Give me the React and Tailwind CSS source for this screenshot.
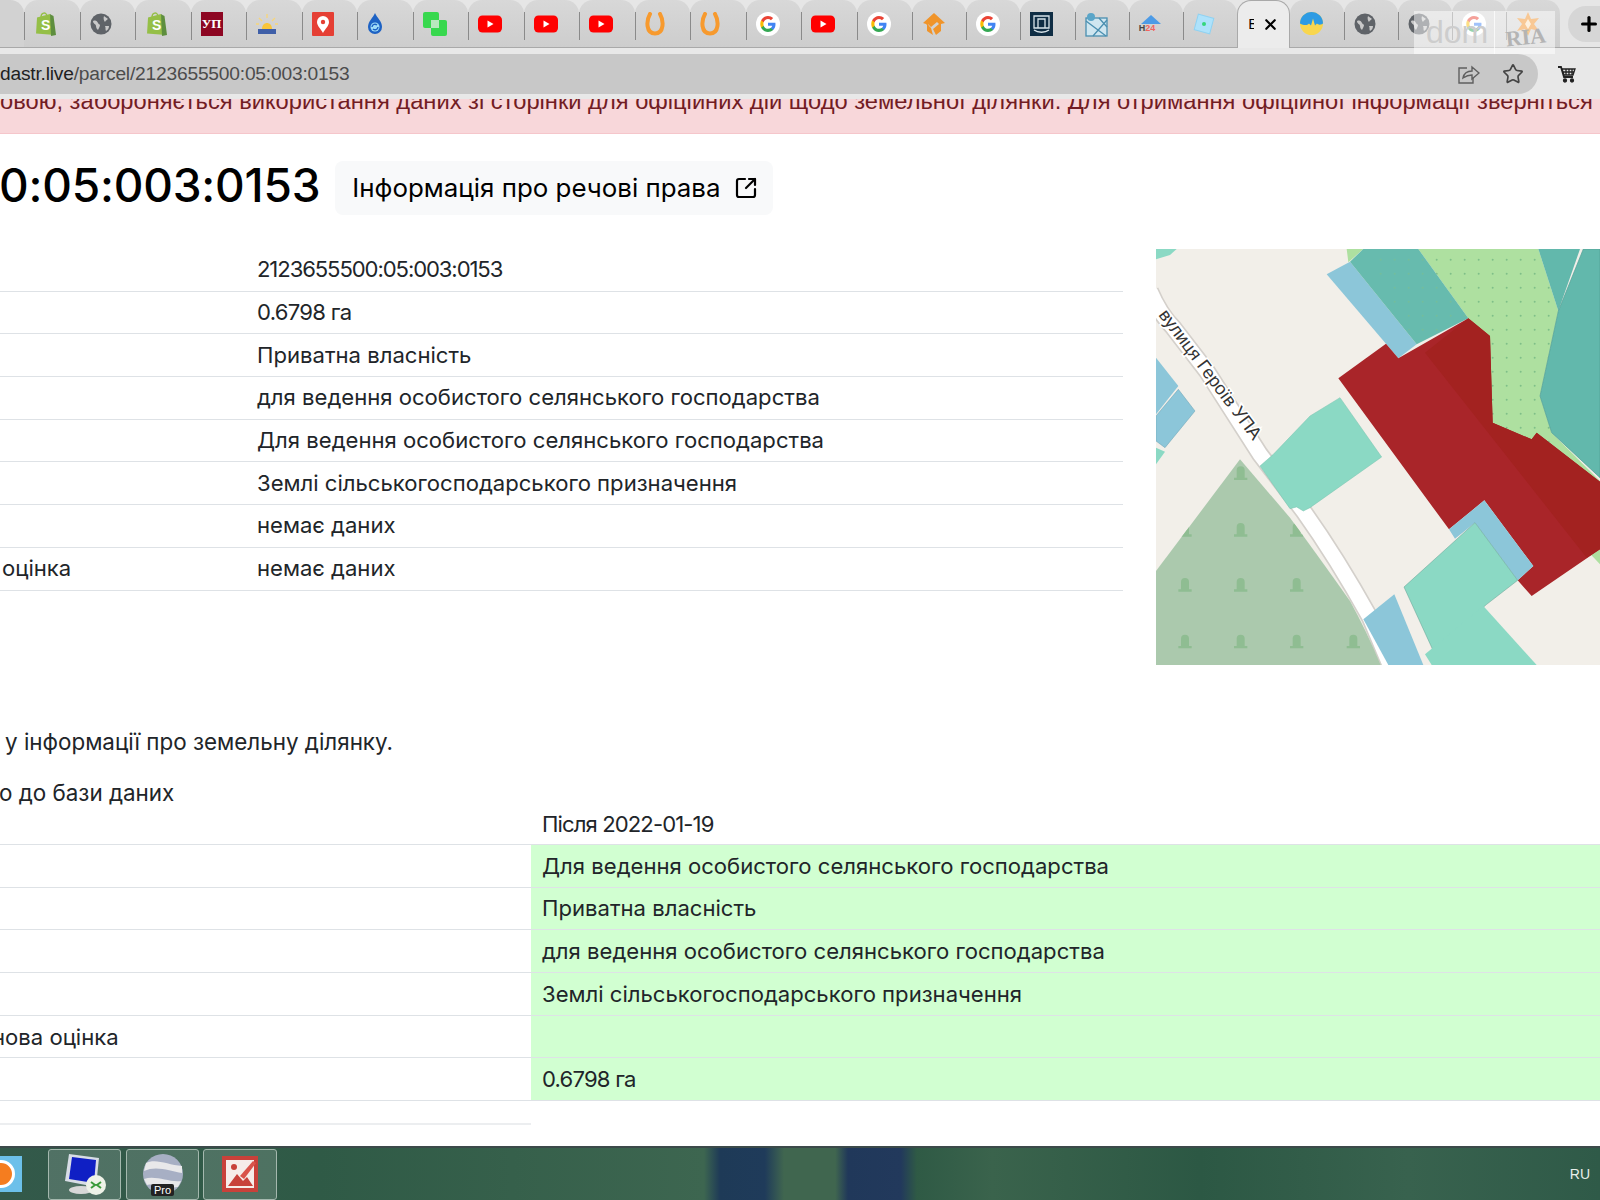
import { Plus, SquareArrowOutUpRight, Star, X } from 'lucide-react'

const Shopify = () => (
  <svg width="24" height="26" viewBox="0 0 24 26">
    <path d="M3 6.500 16 3l5 21-19-1.500z" fill="#95bf47" />
    <path d="M16 3l1.500 1 2 1 2.500 19-5 1z" fill="#5e8e3e" />
    <path d="M7 6c0-4 5-6 6-1" fill="none" stroke="#95bf47" strokeWidth="1.400" />
    <text x="7" y="19" fontSize="14" fontWeight="700" fill="#fff" fontFamily="Liberation Sans, sans-serif">S</text>
  </svg>
)

const Globe = () => (
  <svg width="22" height="22" viewBox="0 0 22 22">
    <circle cx="11" cy="11" r="10.500" fill="#5f6368" />
    <path d="M3 8c3-1 4 0 5 2s2 1 2 2-1 3-2 5c-1-1-2-2-2-4S3 11 3 8zM14 3c1 1 3 2 4 3-1 1-2 1-3 3-1-1-2-4-1-6zM15 13h4c0 2-1 4-3 5-1-2 0-3-1-5z" fill="#c9c9c9" />
  </svg>
)

const Youtube = () => (
  <svg width="24" height="18" viewBox="0 0 24 18">
    <rect width="24" height="17" y="0.500" rx="4.500" fill="#f00" />
    <path d="M9.500 5.500v7l6-3.500z" fill="#fff" />
  </svg>
)

const Horseshoe = () => (
  <svg width="20" height="24" viewBox="0 0 20 24">
    <path d="M5 2C1 9 1 21.500 10 21.500S19 9 15 2" fill="none" stroke="#f79a2e" strokeWidth="4" strokeLinecap="round" />
  </svg>
)

const GoogleG = () => (
  <svg width="24" height="24" viewBox="0 0 48 48">
    <circle cx="24" cy="24" r="24" fill="#fff" />
    <path d="M39 24.500c0-1-.1-2-.3-3H24v6h8.500c-.4 2-1.500 3.600-3.100 4.700v3.800h5c2.900-2.700 4.600-6.700 4.600-11.500z" fill="#4285f4" />
    <path d="M24 40c4.100 0 7.500-1.300 10.400-3.900l-5-3.900c-1.400.9-3.200 1.500-5.400 1.500-4 0-7.500-2.700-8.700-6.400h-5.100v4C13.200 36.800 18.200 40 24 40z" fill="#34a853" />
    <path d="M15.300 27.300c-.7-2-.7-4.500 0-6.600v-4h-5.100c-2.200 4.300-2.200 10.300 0 14.600z" fill="#fbbc05" />
    <path d="M24 14.200c2.300 0 4.300.8 5.900 2.300l4.400-4.400C31.500 9.500 28.100 8 24 8c-5.800 0-10.800 3.200-13.800 8.700l5.100 4c1.200-3.800 4.700-6.500 8.700-6.500z" fill="#ea4335" />
  </svg>
)

const tabIcons = [
  <Shopify />,
  <Globe />,
  <Shopify />,
  <div className="w-[22px] h-[24px] bg-[#8d0622] text-white text-[13px] font-bold flex items-center justify-center font-['Liberation_Serif',serif]">УП</div>,
  <svg width="22" height="22" viewBox="0 0 22 22">
    <rect x="2" y="16" width="18" height="5" fill="#3f5fa8" />
    <path d="M6 16c0-8 10-8 10 0z" fill="#f8c53a" />
    <path d="M11 1v4M3 5l3 3M19 5l-3 3M0 11h3M19 11h3" stroke="#f8d67a" strokeWidth="1.300" />
  </svg>,
  <svg width="22" height="24" viewBox="0 0 22 24">
    <rect width="22" height="24" rx="1" fill="#e53f34" />
    <path d="M11 21c-2-4-6-7-6-11a6 6 0 0 1 12 0c0 4-4 7-6 11z" fill="#fff" />
    <circle cx="11" cy="10" r="2.200" fill="#e53f34" />
  </svg>,
  <svg width="16" height="24" viewBox="0 0 16 24">
    <path d="M8 1c2 5 7 8 7 14a7 7 0 0 1-14 0C1 9 6 6 8 1z" fill="#1d62c4" />
    <circle cx="8" cy="15" r="4.500" fill="#9fdcf8" />
    <path d="M5 15a3 3 0 0 1 5-2M11 15a3 3 0 0 1-5 2" stroke="#1d62c4" strokeWidth="1.400" fill="none" />
  </svg>,
  <svg width="24" height="24" viewBox="0 0 24 24">
    <rect x="0" y="0" width="16" height="16" rx="2" fill="#38d84e" />
    <rect x="8" y="8" width="16" height="16" rx="2" fill="#38d84e" />
    <rect x="8" y="8" width="8" height="8" fill="#b9e8bd" />
  </svg>,
  <Youtube />,
  <Youtube />,
  <Youtube />,
  <Horseshoe />,
  <Horseshoe />,
  <GoogleG />,
  <Youtube />,
  <GoogleG />,
  <svg width="24" height="24" viewBox="0 0 24 24">
    <path d="M12 1 23 11l-4 1v7l-5 4-3-6 6-5-2-2-6 5-3-3 1 3-3-3-3-1z" fill="#f0942a" />
    <path d="M5 12v7l6 4-2-7z" fill="#f0942a" />
  </svg>,
  <GoogleG />,
  <svg width="23" height="24" viewBox="0 0 23 24">
    <rect width="23" height="24" fill="#0f2d44" />
    <path d="M4 4h15v12H4zM8 16V7h7v9M4 18c4 3 11 3 15 0" fill="none" stroke="#d8e4ea" strokeWidth="1.300" />
  </svg>,
  <svg width="23" height="26" viewBox="0 0 23 26">
    <rect x="1" y="7" width="21" height="18" fill="#cfe6f0" stroke="#4a8fb0" strokeWidth="1.300" />
    <path d="M1 10l20 15M22 9 8 25M14 7l8 9" stroke="#4a8fb0" strokeWidth="1.300" fill="none" />
    <circle cx="6" cy="6" r="4" fill="#5aa5c8" />
  </svg>,
  <div className="relative w-[24px] h-[20px]">
    <svg width="24" height="10" viewBox="0 0 24 10"><path d="M2 10 12 1l10 9z" fill="#4d9be6" /></svg>
    <span className="absolute left-0 top-[9px] text-[9px] leading-[10px] font-bold font-['Liberation_Sans',sans-serif]">
      <span className="text-[#444]">H</span><span className="text-[#f2645f]">24</span>
    </span>
  </div>,
  <svg width="22" height="22" viewBox="0 0 22 22">
    <rect x="3" y="3" width="16" height="16" transform="rotate(15 11 11)" fill="#aee2fb" stroke="#8fd2f2" />
    <circle cx="11" cy="11" r="2" fill="#35d67c" />
  </svg>,
]

const tail = [
  <svg width="23" height="23" viewBox="0 0 23 23">
    <circle cx="11.500" cy="11.500" r="11.500" fill="#f8d64e" />
    <path d="M0 11.500a11.500 11.500 0 0 1 23 0c-3 2-5 1-6 0l-2 2-2-7-2 7-2-2c-2 2-5 2-9 0z" fill="#2d9be4" />
  </svg>,
  <Globe />,
  <Globe />,
  <GoogleG />,
  <svg width="24" height="24" viewBox="0 0 24 24">
    <path d="M12 0l3 7 8-1-5 6 5 7-8-2-3 7-3-7-8 2 5-7-5-6 8 1z" fill="#f0902a" />
    <path d="M12 7l3 5-3 5-3-5z" fill="#fbe3c0" />
  </svg>,
]

// отрисовка карти у координатах обрізки, щоб не перераховувати точки
const ParcelMap = () => {
  const treeRows = [695, 865, 1030, 1200]
  const treeCols = [105, 272, 440, 610]
  const road = 'M0 150Q30 220 70 260L170 390 330 640 460 810Q560 950 660 1130L720 1272'
  return (
    <svg className="w-[444px] h-[416px] shrink-0" viewBox="18 24 1332 1248">
      <defs>
        <pattern id="dots" width="42" height="42" patternUnits="userSpaceOnUse">
          <circle cx="20" cy="14" r="3" fill="#7fbf88" />
        </pattern>
        <clipPath id="forest">
          <path d="M270 655 420 830Q530 980 600 1080 650 1170 692 1272H18V990z" />
        </clipPath>
      </defs>
      <rect x="18" y="24" width="1332" height="1248" fill="#f2efe9" />
      <path d="M18 24h62L60 42 18 55z" fill="#8bd9c4" />

      <path d={road} fill="none" stroke="#d4d0cb" strokeWidth="54" />
      <path d={road} fill="none" stroke="#fff" strokeWidth="44" />

      <path d="M270 655 420 830Q530 980 600 1080 650 1170 692 1272H18V990z" fill="#abc9ad" />
      <g clipPath="url(#forest)" fill="#8fbd92">
        {treeRows.map(y => treeCols.map(x => (
          <path key={`${x}-${y}`} d={`M${x - 20} ${y + 22}h40v-7h-8v-22a12 12 0 0 0-24 0v22h-8z`} />
        )))}
      </g>

      <path d="M590 24h50l-45 40z" fill="#aee0a0" />
      <path d="M805 24h360l60 186-55 255 35 110 145 145v250L1000 600 955 232z" fill="#aee0a0" />
      <path d="M805 24h360l60 186-55 255 35 110 145 145v250L1000 600 955 232z" fill="url(#dots)" />

      <path d="M530 100 600 62 800 310 745 352z" fill="#8cc6d9" />
      <path d="M600 62 640 24H805L955 232 800 310z" fill="#67bbae" />
      <path d="M640 24H805L955 232 800 310z" fill="url(#dots)" opacity=".5" />
      <path d="M1165 24h125l-65 186z" fill="#62b8ac" />
      <path d="M1300 24h50v686l-145-135-35-110 55-255z" fill="#62b8ac" stroke="#4f9d92" strokeWidth="2" />

      <path d="M565 412 708 308l37 44 210-120 65 53 8 260 117 50 15-20 190 147v203l-205 140-42-47 47-43-147-197-106 87z" fill="#a92529" />
      <path d="M825 335 955 232l65 53 8 260 117 50 15-20 190 147v203l-40 25z" fill="#a32220" />

      <path d="M330 675l40-35 110-115 90-55 125 178-215 152-20 10-20-12-20 5z" fill="#8bd9c4" stroke="#79c3ae" strokeWidth="1.500" />
      <path d="M897 865 1003 778l147 197-47 43-128-173-60 48z" fill="#8cc6d9" />
      <path d="M762 1038 975 845l128 173-93 72-160 140z" fill="#8bd9c4" stroke="#5f9f90" strokeWidth="1.500" />
      <path d="M825 1240 1000 1095l160 177H845z" fill="#8bd9c4" />
      <path d="M640 1135 733 1060l87 212H715z" fill="#8cc6d9" />
      <path d="M18 350l67 85-67 85z" fill="#8cc6d9" />
      <path d="M18 525l67-80 50 65-90 110-27-20z" fill="#8cc6d9" stroke="#6aa0b2" strokeWidth="1.500" />
      <path d="M18 620l27 12-27 38z" fill="#8bd9c4" />

      <text x="24" y="222" transform="rotate(53 24 222)" fontSize="54" fill="#333" stroke="#fff" strokeWidth="10" paintOrder="stroke" className="font-['Liberation_Sans',sans-serif]">вулиця Героїв УПА</text>
    </svg>
  )
}

const infoRows = [
  ['', '2123655500:05:003:0153', 'tracking-[-1.1px]'],
  ['', '0.6798 га', 'tracking-[-0.7px]'],
  ['', 'Приватна власність', ''],
  ['', 'для ведення особистого селянського господарства', ''],
  ['', 'Для ведення особистого селянського господарства', ''],
  ['', 'Землі сільськогосподарського призначення', ''],
  ['', 'немає даних', ''],
  ['оцінка', 'немає даних', ''],
]

const changeRows = [
  ['', 'Для ведення особистого селянського господарства', ''],
  ['', 'Приватна власність', ''],
  ['', 'для ведення особистого селянського господарства', ''],
  ['', 'Землі сільськогосподарського призначення', ''],
  ['нова оцінка', '', ''],
  ['', '0.6798 га', 'tracking-[-0.8px]'],
]

const App = () => {
  return (
    <div className="relative w-[1600px] h-[1200px] overflow-hidden bg-white flex flex-col font-['Inter',sans-serif] text-[#212529]">
      {/* вкладки */}
      <div className="h-[48px] shrink-0 flex items-stretch bg-[#e6e6e6] border-b border-[#a9a9a9]">
        <div className="w-[24px] shrink-0 bg-[#d2d2d2] rounded-tr-[14px]" />
        {tabIcons.map((icon, i) => (
          <div key={i} className={`${i < 16 ? 'w-[55.500px]' : 'w-[54.200px]'} shrink-0 bg-gradient-to-b from-[#d8d8d8] to-[#cdcdcd] rounded-t-[14px] relative flex items-center pl-[10px]`}>
            <span className="absolute left-0 top-[12px] h-[28px] w-[1px] bg-[#8a8a8a]" />
            {icon}
          </div>
        ))}
        <div className="w-[53px] shrink-0 bg-[#ececec] border border-b-0 border-[#a9a9a9] rounded-t-[14px] flex items-center pl-[10px] gap-[8px] -mb-px">
          <span className="text-[15px] font-['Liberation_Sans',sans-serif] text-black w-[6px] overflow-hidden">В</span>
          <X size={17} strokeWidth={3} className="text-black" />
        </div>
        {tail.map((icon, i) => (
          <div key={i} className="w-[54px] shrink-0 bg-gradient-to-b from-[#d8d8d8] to-[#cdcdcd] rounded-t-[14px] relative flex items-center pl-[10px]">
            {i > 0 && <span className="absolute left-0 top-[12px] h-[28px] w-[1px] bg-[#8a8a8a]" />}
            {icon}
          </div>
        ))}
        <div className="flex-1 flex items-center justify-end">
          <div className="w-[36px] h-[36px] rounded-l-full bg-[#d6d6d6] flex items-center pl-[10px] shrink-0 -mr-[4px]">
            <Plus size={22} strokeWidth={3.500} className="text-black" />
          </div>
        </div>
      </div>

      {/* адресний рядок */}
      <div className="h-[51px] shrink-0 bg-[#e8e8e8] pt-[6px] pb-[5px] flex">
        <div className="w-[1538px] h-[40px] bg-[#c8c8c8] rounded-r-[20px] flex items-center justify-between pr-[14px] shrink-0">
          <div className="text-[19.200px] tracking-[-0.2px] font-['Liberation_Sans',sans-serif] text-[#1f1f1f]">
            dastr.live<span className="text-[#4c4c4c]">/parcel/2123655500:05:003:0153</span>
          </div>
          <div className="flex items-center gap-[22px]">
            <svg width="22" height="20" viewBox="0 0 22 20" fill="none" stroke="#5f5f5f" strokeWidth="1.400">
              <path d="M9 4H1v15h14v-5" />
              <path d="M5 14c1-5 5-7 9-7V3l7 6-7 6v-4c-3 0-6 1-9 3z" />
            </svg>
            <Star size={22} strokeWidth={1.800} className="text-[#444]" />
          </div>
        </div>
        <div className="flex-1 flex items-center pl-[20px]">
          <svg width="18" height="17" viewBox="0 0 18 17" fill="none" stroke="#222" strokeWidth="1.300">
            <path d="M0 1h3l3 10h9" strokeWidth="1.800" />
            <path d="M4 3h13l-2 6H6zM8 3v6M11 3v6M14 3v6M5 6h11" />
            <circle cx="7" cy="14.500" r="1.500" fill="#222" />
            <circle cx="14" cy="14.500" r="1.500" fill="#222" />
          </svg>
        </div>
      </div>

      {/* попередження, верх тексту обрізаний */}
      <div className="h-[35px] shrink-0 overflow-hidden bg-[#f8d7da] border-b border-[#f5c6cb]">
        <div className="-mt-[12px] whitespace-nowrap text-[23.700px] leading-[28px] text-[#721c24] font-['Liberation_Sans',sans-serif]">
          овою, забороняється використання даних зі сторінки для офіційних дій щодо земельної ділянки. Для отримання офіційної інформації зверніться
        </div>
      </div>

      <div className="flex-1 min-h-0 overflow-hidden">
        <div className="pt-[27px] h-[81px] flex items-center gap-[15px]">
          <h1 className="text-[46px] leading-[48px] pb-[6px] font-medium text-black whitespace-nowrap -ml-[1px] tracking-[-0.2px]">0:05:003:0153</h1>
          <div className="h-[54px] w-[438px] rounded-[8px] bg-[#f8f9fa] flex items-center pl-[17px] gap-[14px] text-[25.900px] text-black">
            <span className="whitespace-nowrap">Інформація про речові права</span>
            <SquareArrowOutUpRight size={24} strokeWidth={2.200} />
          </div>
        </div>

        <div className="mt-[34px] flex">
          <div className="w-[1123px] shrink-0 text-[22.100px]">
            {infoRows.map(([label, value, extra], i) => (
              <div key={i} className="h-[42.700px] border-b border-[#dee2e6] flex items-center whitespace-nowrap">
                <div className="w-[257px] shrink-0 pl-[2px]">{label}</div>
                <div className={extra}>{value}</div>
              </div>
            ))}
          </div>
          <div className="w-[33px] shrink-0" />
          <ParcelMap />
        </div>

        <p className="mt-[61px] text-[22.400px] leading-[32px] pl-[5px] whitespace-nowrap">у інформації про земельну ділянку.</p>
        <p className="mt-[19px] text-[22.400px] leading-[32px] -ml-[1px] whitespace-nowrap">о до бази даних</p>

        <div className="mt-[-6px] text-[22.100px]">
          <div className="h-[42px] border-b border-[#dee2e6] flex items-center pt-[2px] pl-[542px] whitespace-nowrap tracking-[-0.9px]">Після 2022-01-19</div>
          {changeRows.map(([label, value, extra], i) => (
            <div key={i} className="h-[42.700px] border-b border-[#dee2e6] flex whitespace-nowrap">
              <div className="w-[531px] shrink-0 flex items-center pt-[1px]">
                <span className="-ml-[8px]">{label}</span>
              </div>
              <div className={`flex-1 bg-[#d1ffd1] flex items-center pt-[1px] pl-[11px] ${extra}`}>{value}</div>
            </div>
          ))}
          <div className="h-[24px] w-[531px] border-b-2 border-[#eceef0]" />
        </div>
      </div>

      {/* панель задач */}
      <div className="h-[54px] shrink-0 border-t-2 border-[#3c4a4a] flex items-center bg-[linear-gradient(90deg,#33594a_0%,#2f5a46_20%,#3d6650_44%,#1e3a57_45%,#1f3b5a_47.800%,#40664f_49%,#40664f_52.200%,#20385a_53%,#22395c_56.300%,#2f5a45_57.300%,#3a634c_62%,#2c5844_75%,#38624e_88%,#2f5a48_100%)]">
        <div className="w-[48px] shrink-0 overflow-hidden flex items-center">
          <div className="w-[22px] h-[36px] bg-[#6cc0ea] flex items-center overflow-hidden">
            <div className="w-[28px] h-[28px] rounded-full bg-[#f57d1f] -ml-[13px] border-[3px] border-white shrink-0" />
          </div>
        </div>
        <div className="w-[73px] h-[51px] shrink-0 rounded-[3px] border border-[#a4b8ae] bg-white/15 flex items-center justify-center">
          <svg width="44" height="44" viewBox="0 0 44 44">
            <path d="M6 2 36 6l-3 29L2 29z" fill="#d8dde6" />
            <path d="M9 5l24 3-2 23L6 27z" fill="#0f1fc4" />
            <ellipse cx="18" cy="38" rx="12" ry="4" fill="#d8d8d8" />
            <circle cx="33" cy="33" r="10" fill="#eef2e8" />
            <path d="M28 30l4 3-4 3M38 30l-4 3 4 3" stroke="#3a9a3a" strokeWidth="2" fill="none" />
          </svg>
        </div>
        <div className="w-[5px] shrink-0" />
        <div className="w-[73px] h-[51px] shrink-0 rounded-[3px] border border-[#a4b8ae] bg-white/15 flex items-center justify-center relative">
          <svg width="42" height="42" viewBox="0 0 42 42">
            <circle cx="21" cy="21" r="20" fill="#a7afc4" />
            <path d="M4 10c10-5 22 2 36 3v7C28 18 14 12 2 18zM2 26c12-4 26 4 37 2l-3 6c-10 2-22-4-31-2z" fill="#e8e8ea" />
          </svg>
          <span className="absolute bottom-[3px] left-[24px] px-[3px] rounded-[2px] bg-[#222] text-white text-[11px] leading-[12px] font-['Liberation_Sans',sans-serif]">Pro</span>
        </div>
        <div className="w-[4px] shrink-0" />
        <div className="w-[74px] h-[51px] shrink-0 rounded-[3px] border border-[#a4b8ae] bg-white/15 flex items-center justify-center">
          <svg width="36" height="36" viewBox="0 0 36 36">
            <rect width="36" height="36" fill="#c8413a" />
            <rect x="4" y="4" width="28" height="28" fill="#f6ece9" />
            <path d="M6 30 15 18l6 7 4-4 6 9z" fill="#c8413a" />
            <circle cx="12" cy="11" r="3" fill="#c8413a" />
            <path d="M18 20 31 5l3 2-12 16z" fill="#d9534a" />
          </svg>
        </div>
        <div className="flex-1" />
        <span className="pr-[10px] text-[14px] text-[#e8eeea] font-['Liberation_Sans',sans-serif]">RU</span>
      </div>

      {/* водяний знак */}
      <div className="absolute left-[1414px] top-[11px] w-[141px] h-[43px] bg-white/50 flex overflow-hidden">
        <div className="w-[81px] border-r border-white/70 pl-[12px] text-[32px] leading-[42px] text-[#cdcdcd] font-['Liberation_Sans',sans-serif]">dom</div>
        <div className="pl-[10px] pt-[15px] text-[22px] leading-[24px] font-bold text-[#b4b4b4] -rotate-6 font-['Liberation_Serif',serif]">RIA</div>
      </div>
    </div>
  )
}

export default App
